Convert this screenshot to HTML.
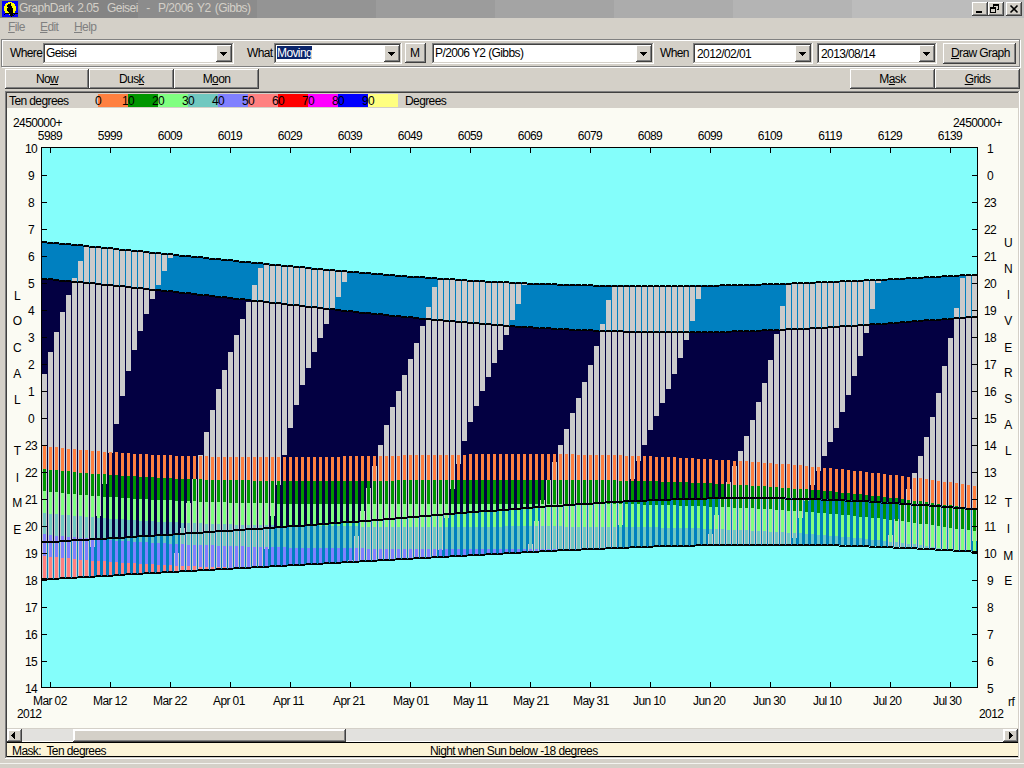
<!DOCTYPE html>
<html><head><meta charset="utf-8"><style>
html,body{margin:0;padding:0}
body{width:1024px;height:768px;position:relative;overflow:hidden;background:#d4d0c8;font-family:"Liberation Sans", sans-serif;font-size:11px;color:#000}
.a{position:absolute}
.t{position:absolute;white-space:nowrap;line-height:13px;font-size:12px;letter-spacing:-0.6px}
.u{position:absolute;white-space:nowrap;line-height:15px;font-size:12px;letter-spacing:-0.6px}
.raised{position:absolute;background:#d4d0c8;box-shadow:inset -1px -1px #404040, inset 1px 1px #fff, inset -2px -2px #808080, inset 2px 2px #d4d0c8}
.sunken{position:absolute;background:#fff;box-shadow:inset -1px -1px #fff, inset 1px 1px #808080, inset -2px -2px #d4d0c8, inset 2px 2px #404040}
</style></head><body>
<div class="a" style="left:0px;top:0;width:19px;height:18px;background:#808080"></div><div class="a" style="left:19px;top:0;width:119px;height:18px;background:#848484"></div><div class="a" style="left:138px;top:0;width:119px;height:18px;background:#8c8c8c"></div><div class="a" style="left:257px;top:0;width:119px;height:18px;background:#949494"></div><div class="a" style="left:376px;top:0;width:119px;height:18px;background:#9c9c9c"></div><div class="a" style="left:495px;top:0;width:119px;height:18px;background:#a4a4a4"></div><div class="a" style="left:614px;top:0;width:119px;height:18px;background:#acacac"></div><div class="a" style="left:733px;top:0;width:119px;height:18px;background:#b4b4b4"></div><div class="a" style="left:852px;top:0;width:119px;height:18px;background:#bcbcbc"></div><div class="a" style="left:971px;top:0;width:53px;height:18px;background:#c0c0c0"></div><svg class="a" style="left:0;top:0" width="20" height="18" shape-rendering="crispEdges"><rect x="2" y="1" width="16" height="16" fill="#0000ff"/><path fill="#ffff00" d="M8 2h4v1h-4zM6 3h8v1h-8zM5 4h10v1h-10zM5 5h10v1h-10zM4 6h12v1h-12zM4 7h12v1h-12zM4 8h12v1h-12zM4 9h12v1h-12zM4 10h12v1h-12zM5 11h10v1h-10zM5 12h10v1h-10zM9 14h1v1h-1z"/><path fill="#000" d="M10 3h1v1h-1zM8 4h3v1h-3zM7 5h4v1h-4zM7 6h5v1h-5zM8 7h4v1h-4zM7 8h6v1h-6zM7 9h6v1h-6zM7 10h6v1h-6zM8 11h5v1h-5zM9 12h4v1h-4zM5 13h13v1h-13zM4 14h1v1h-1zM10 14h3v1h-3zM14 14h1v1h-1zM10 15h4v1h-4zM11 16h1v1h-1z"/></svg><div class="u" style="left:19px;top:1px;color:#d4d0c8;letter-spacing:-0.5px;word-spacing:1.3px">GraphDark 2.05&nbsp;&nbsp;Geisei&nbsp;&nbsp;-&nbsp;&nbsp;P/2006 Y2 (Gibbs)</div><div class="raised" style="left:972px;top:2px;width:16px;height:14px"><div class="a" style="left:4px;top:9px;width:6px;height:2px;background:#000"></div></div><div class="raised" style="left:988px;top:2px;width:16px;height:14px"><svg class="a" style="left:0;top:0" width="16" height="14" shape-rendering="crispEdges"><path d="M5 2h6v2h-6zM5 4h1v1h-1zM10 4h1v4h-1zM9 7h1v1h-1zM2 5h6v2h-6zM2 7h1v4h-1zM7 7h1v4h-1zM2 10h6v1h-6z" fill="#000"/></svg></div><div class="raised" style="left:1006px;top:2px;width:16px;height:14px"><svg class="a" style="left:0;top:0" width="16" height="14"><path d="M4.5 3.5L11.5 10.5M11.5 3.5L4.5 10.5" stroke="#000" stroke-width="1.6"/></svg></div><div class="u" style="left:8px;top:20px;color:#808080"><u>F</u>ile</div><div class="u" style="left:40px;top:20px;color:#808080"><u>E</u>dit</div><div class="u" style="left:74px;top:20px;color:#808080"><u>H</u>elp</div><div class="a" style="left:2px;top:40px;width:1017px;height:26px;border:1px solid #fff"></div><div class="a" style="left:1px;top:39px;width:1017px;height:26px;border:1px solid #808080"></div><div class="u" style="left:10px;top:46px;">Where</div><div class="sunken" style="left:43px;top:43px;width:191px;height:21px"><div class="u" style="left:3px;top:3px">Geisei</div><div class="raised" style="right:2px;top:2px;width:16px;height:17px"><svg class="a" style="left:4px;top:7px" width="7" height="4" shape-rendering="crispEdges"><path d="M0 0h7v1h-1v1h-1v1h-1v1h-1v-1h-1v-1h-1v-1h-1z" fill="#000"/></svg></div></div><div class="u" style="left:247px;top:46px;">What</div><div class="sunken" style="left:274px;top:43px;width:128px;height:21px"><div class="a" style="left:3px;top:3px;width:35px;height:13px;background:#0a246a"></div><div class="u" style="left:3px;top:3px"><span style="color:#fff">Moving</span></div><div class="raised" style="right:2px;top:2px;width:16px;height:17px"><svg class="a" style="left:4px;top:7px" width="7" height="4" shape-rendering="crispEdges"><path d="M0 0h7v1h-1v1h-1v1h-1v1h-1v-1h-1v-1h-1v-1h-1z" fill="#000"/></svg></div></div><div class="raised" style="left:405px;top:43px;width:21px;height:20px"><div class="u" style="left:5px;top:3px">M</div></div><div class="sunken" style="left:432px;top:43px;width:222px;height:21px"><div class="u" style="left:3px;top:3px">P/2006 Y2 (Gibbs)</div><div class="raised" style="right:2px;top:2px;width:16px;height:17px"><svg class="a" style="left:4px;top:7px" width="7" height="4" shape-rendering="crispEdges"><path d="M0 0h7v1h-1v1h-1v1h-1v1h-1v-1h-1v-1h-1v-1h-1z" fill="#000"/></svg></div></div><div class="u" style="left:660px;top:46px;">When</div><div class="sunken" style="left:693px;top:43px;width:120px;height:21px"><div class="u" style="left:4px;top:4px">2012/02/01</div><div class="raised" style="right:2px;top:2px;width:16px;height:17px"><svg class="a" style="left:4px;top:7px" width="7" height="4" shape-rendering="crispEdges"><path d="M0 0h7v1h-1v1h-1v1h-1v1h-1v-1h-1v-1h-1v-1h-1z" fill="#000"/></svg></div></div><div class="sunken" style="left:817px;top:43px;width:120px;height:21px"><div class="u" style="left:4px;top:4px">2013/08/14</div><div class="raised" style="right:2px;top:2px;width:16px;height:17px"><svg class="a" style="left:4px;top:7px" width="7" height="4" shape-rendering="crispEdges"><path d="M0 0h7v1h-1v1h-1v1h-1v1h-1v-1h-1v-1h-1v-1h-1z" fill="#000"/></svg></div></div><div class="raised" style="left:943px;top:43px;width:73px;height:21px"><div class="u" style="left:8px;top:3px"><u>D</u>raw Graph</div></div><div class="raised" style="left:5px;top:69px;width:84px;height:20px"><div class="u" style="left:0;width:84px;top:3px;text-align:center">No<u>w</u></div></div><div class="raised" style="left:89px;top:69px;width:85px;height:20px"><div class="u" style="left:0;width:85px;top:3px;text-align:center">Dus<u>k</u></div></div><div class="raised" style="left:174px;top:69px;width:85px;height:20px"><div class="u" style="left:0;width:85px;top:3px;text-align:center">M<u>o</u>on</div></div><div class="raised" style="left:850px;top:69px;width:85px;height:20px"><div class="u" style="left:0;width:85px;top:3px;text-align:center">M<u>a</u>sk</div></div><div class="raised" style="left:935px;top:69px;width:85px;height:20px"><div class="u" style="left:0;width:85px;top:3px;text-align:center"><u>G</u>rids</div></div><div class="a" style="left:5px;top:91px;width:1015px;height:668px;box-shadow:inset -1px -1px #fff, inset 1px 1px #808080, inset -2px -2px #d4d0c8, inset 2px 2px #404040"></div><div class="a" style="left:7px;top:108px;width:1011px;height:620px;background:#fbfbf3"></div><div class="u" style="left:9px;top:94px;">Ten degrees</div><div class="a" style="left:98px;top:94px;width:30px;height:13px;background:#ff8040"></div><div class="a" style="left:128px;top:94px;width:30px;height:13px;background:#009600"></div><div class="a" style="left:158px;top:94px;width:30px;height:13px;background:#80ff80"></div><div class="a" style="left:188px;top:94px;width:30px;height:13px;background:#70c8c0"></div><div class="a" style="left:218px;top:94px;width:30px;height:13px;background:#8080ff"></div><div class="a" style="left:248px;top:94px;width:30px;height:13px;background:#ff8080"></div><div class="a" style="left:278px;top:94px;width:30px;height:13px;background:#ff0000"></div><div class="a" style="left:308px;top:94px;width:30px;height:13px;background:#ff00ff"></div><div class="a" style="left:338px;top:94px;width:30px;height:13px;background:#0000ff"></div><div class="a" style="left:368px;top:94px;width:30px;height:13px;background:#ffff80"></div><div class="t" style="left:83px;width:30px;text-align:center;top:95px">0</div><div class="t" style="left:113px;width:30px;text-align:center;top:95px">10</div><div class="t" style="left:143px;width:30px;text-align:center;top:95px">20</div><div class="t" style="left:173px;width:30px;text-align:center;top:95px">30</div><div class="t" style="left:203px;width:30px;text-align:center;top:95px">40</div><div class="t" style="left:233px;width:30px;text-align:center;top:95px">50</div><div class="t" style="left:263px;width:30px;text-align:center;top:95px">60</div><div class="t" style="left:293px;width:30px;text-align:center;top:95px">70</div><div class="t" style="left:323px;width:30px;text-align:center;top:95px">80</div><div class="t" style="left:353px;width:30px;text-align:center;top:95px">90</div><div class="u" style="left:405px;top:94px;">Degrees</div><div class="t" style="left:25px;width:50px;text-align:center;top:130px">5989</div><div class="t" style="left:85px;width:50px;text-align:center;top:130px">5999</div><div class="t" style="left:145px;width:50px;text-align:center;top:130px">6009</div><div class="t" style="left:205px;width:50px;text-align:center;top:130px">6019</div><div class="t" style="left:265px;width:50px;text-align:center;top:130px">6029</div><div class="t" style="left:325px;width:50px;text-align:center;top:130px">6039</div><div class="t" style="left:385px;width:50px;text-align:center;top:130px">6049</div><div class="t" style="left:445px;width:50px;text-align:center;top:130px">6059</div><div class="t" style="left:505px;width:50px;text-align:center;top:130px">6069</div><div class="t" style="left:565px;width:50px;text-align:center;top:130px">6079</div><div class="t" style="left:625px;width:50px;text-align:center;top:130px">6089</div><div class="t" style="left:685px;width:50px;text-align:center;top:130px">6099</div><div class="t" style="left:745px;width:50px;text-align:center;top:130px">6109</div><div class="t" style="left:805px;width:50px;text-align:center;top:130px">6119</div><div class="t" style="left:865px;width:50px;text-align:center;top:130px">6129</div><div class="t" style="left:925px;width:50px;text-align:center;top:130px">6139</div><div class="t" style="left:33px;top:695px">Mar 02</div><div class="t" style="left:93px;top:695px">Mar 12</div><div class="t" style="left:153px;top:695px">Mar 22</div><div class="t" style="left:213px;top:695px">Apr 01</div><div class="t" style="left:273px;top:695px">Apr 11</div><div class="t" style="left:333px;top:695px">Apr 21</div><div class="t" style="left:393px;top:695px">May 01</div><div class="t" style="left:453px;top:695px">May 11</div><div class="t" style="left:513px;top:695px">May 21</div><div class="t" style="left:573px;top:695px">May 31</div><div class="t" style="left:633px;top:695px">Jun 10</div><div class="t" style="left:693px;top:695px">Jun 20</div><div class="t" style="left:753px;top:695px">Jun 30</div><div class="t" style="left:813px;top:695px">Jul 10</div><div class="t" style="left:873px;top:695px">Jul 20</div><div class="t" style="left:933px;top:695px">Jul 30</div><div class="t" style="left:13px;top:117px;">2450000+</div><div class="t" style="left:953px;top:117px;">2450000+</div><div class="t" style="left:17px;top:708px;">2012</div><div class="t" style="left:979px;top:708px;">2012</div><div class="t" style="left:1008px;top:696px;">rf</div><div class="t" style="left:16px;width:30px;text-align:center;top:143px">10</div><div class="t" style="left:975px;width:30px;text-align:center;top:143px">1</div><div class="t" style="left:16px;width:30px;text-align:center;top:170px">9</div><div class="t" style="left:975px;width:30px;text-align:center;top:170px">0</div><div class="t" style="left:16px;width:30px;text-align:center;top:197px">8</div><div class="t" style="left:975px;width:30px;text-align:center;top:197px">23</div><div class="t" style="left:16px;width:30px;text-align:center;top:224px">7</div><div class="t" style="left:975px;width:30px;text-align:center;top:224px">22</div><div class="t" style="left:16px;width:30px;text-align:center;top:251px">6</div><div class="t" style="left:975px;width:30px;text-align:center;top:251px">21</div><div class="t" style="left:16px;width:30px;text-align:center;top:278px">5</div><div class="t" style="left:975px;width:30px;text-align:center;top:278px">20</div><div class="t" style="left:16px;width:30px;text-align:center;top:305px">4</div><div class="t" style="left:975px;width:30px;text-align:center;top:305px">19</div><div class="t" style="left:16px;width:30px;text-align:center;top:332px">3</div><div class="t" style="left:975px;width:30px;text-align:center;top:332px">18</div><div class="t" style="left:16px;width:30px;text-align:center;top:359px">2</div><div class="t" style="left:975px;width:30px;text-align:center;top:359px">17</div><div class="t" style="left:16px;width:30px;text-align:center;top:386px">1</div><div class="t" style="left:975px;width:30px;text-align:center;top:386px">16</div><div class="t" style="left:16px;width:30px;text-align:center;top:413px">0</div><div class="t" style="left:975px;width:30px;text-align:center;top:413px">15</div><div class="t" style="left:16px;width:30px;text-align:center;top:440px">23</div><div class="t" style="left:975px;width:30px;text-align:center;top:440px">14</div><div class="t" style="left:16px;width:30px;text-align:center;top:467px">22</div><div class="t" style="left:975px;width:30px;text-align:center;top:467px">13</div><div class="t" style="left:16px;width:30px;text-align:center;top:494px">21</div><div class="t" style="left:975px;width:30px;text-align:center;top:494px">12</div><div class="t" style="left:16px;width:30px;text-align:center;top:521px">20</div><div class="t" style="left:975px;width:30px;text-align:center;top:521px">11</div><div class="t" style="left:16px;width:30px;text-align:center;top:548px">19</div><div class="t" style="left:975px;width:30px;text-align:center;top:548px">10</div><div class="t" style="left:16px;width:30px;text-align:center;top:575px">18</div><div class="t" style="left:975px;width:30px;text-align:center;top:575px">9</div><div class="t" style="left:16px;width:30px;text-align:center;top:602px">17</div><div class="t" style="left:975px;width:30px;text-align:center;top:602px">8</div><div class="t" style="left:16px;width:30px;text-align:center;top:629px">16</div><div class="t" style="left:975px;width:30px;text-align:center;top:629px">7</div><div class="t" style="left:16px;width:30px;text-align:center;top:656px">15</div><div class="t" style="left:975px;width:30px;text-align:center;top:656px">6</div><div class="t" style="left:16px;width:30px;text-align:center;top:683px">14</div><div class="t" style="left:975px;width:30px;text-align:center;top:683px">5</div><div class="t" style="left:7px;width:20px;text-align:center;top:290px">L</div><div class="t" style="left:7px;width:20px;text-align:center;top:315px">O</div><div class="t" style="left:7px;width:20px;text-align:center;top:342px">C</div><div class="t" style="left:7px;width:20px;text-align:center;top:368px">A</div><div class="t" style="left:7px;width:20px;text-align:center;top:394px">L</div><div class="t" style="left:7px;width:20px;text-align:center;top:445px">T</div><div class="t" style="left:7px;width:20px;text-align:center;top:472px">I</div><div class="t" style="left:7px;width:20px;text-align:center;top:497px">M</div><div class="t" style="left:7px;width:20px;text-align:center;top:524px">E</div><div class="t" style="left:998px;width:20px;text-align:center;top:237px">U</div><div class="t" style="left:998px;width:20px;text-align:center;top:263px">N</div><div class="t" style="left:998px;width:20px;text-align:center;top:289px">I</div><div class="t" style="left:998px;width:20px;text-align:center;top:315px">V</div><div class="t" style="left:998px;width:20px;text-align:center;top:342px">E</div><div class="t" style="left:998px;width:20px;text-align:center;top:367px">R</div><div class="t" style="left:998px;width:20px;text-align:center;top:393px">S</div><div class="t" style="left:998px;width:20px;text-align:center;top:419px">A</div><div class="t" style="left:998px;width:20px;text-align:center;top:445px">L</div><div class="t" style="left:998px;width:20px;text-align:center;top:497px">T</div><div class="t" style="left:998px;width:20px;text-align:center;top:523px">I</div><div class="t" style="left:998px;width:20px;text-align:center;top:550px">M</div><div class="t" style="left:998px;width:20px;text-align:center;top:575px">E</div><svg class="a" style="left:0;top:0" width="1024" height="768" shape-rendering="crispEdges"><path fill="#84fefb" d="M42 148h6v540h-6zM48 148h6v540h-6zM54 148h6v540h-6zM60 148h6v540h-6zM66 148h6v540h-6zM72 148h6v540h-6zM78 148h6v540h-6zM84 148h6v540h-6zM90 148h6v540h-6zM96 148h6v540h-6zM102 148h6v540h-6zM108 148h6v540h-6zM114 148h6v540h-6zM120 148h6v540h-6zM126 148h6v540h-6zM132 148h6v540h-6zM138 148h6v540h-6zM144 148h6v540h-6zM150 148h6v540h-6zM156 148h6v540h-6zM162 148h6v540h-6zM168 148h6v540h-6zM174 148h6v540h-6zM180 148h6v540h-6zM186 148h6v540h-6zM192 148h6v540h-6zM198 148h6v540h-6zM204 148h6v540h-6zM210 148h6v540h-6zM216 148h6v540h-6zM222 148h6v540h-6zM228 148h6v540h-6zM234 148h6v540h-6zM240 148h6v540h-6zM246 148h6v540h-6zM252 148h6v540h-6zM258 148h6v540h-6zM264 148h6v540h-6zM270 148h6v540h-6zM276 148h6v540h-6zM282 148h6v540h-6zM288 148h6v540h-6zM294 148h6v540h-6zM300 148h6v540h-6zM306 148h6v540h-6zM312 148h6v540h-6zM318 148h6v540h-6zM324 148h6v540h-6zM330 148h6v540h-6zM336 148h6v540h-6zM342 148h6v540h-6zM348 148h6v540h-6zM354 148h6v540h-6zM360 148h6v540h-6zM366 148h6v540h-6zM372 148h6v540h-6zM378 148h6v540h-6zM384 148h6v540h-6zM390 148h6v540h-6zM396 148h6v540h-6zM402 148h6v540h-6zM408 148h6v540h-6zM414 148h6v540h-6zM420 148h6v540h-6zM426 148h6v540h-6zM432 148h6v540h-6zM438 148h6v540h-6zM444 148h6v540h-6zM450 148h6v540h-6zM456 148h6v540h-6zM462 148h6v540h-6zM468 148h6v540h-6zM474 148h6v540h-6zM480 148h6v540h-6zM486 148h6v540h-6zM492 148h6v540h-6zM498 148h6v540h-6zM504 148h6v540h-6zM510 148h6v540h-6zM516 148h6v540h-6zM522 148h6v540h-6zM528 148h6v540h-6zM534 148h6v540h-6zM540 148h6v540h-6zM546 148h6v540h-6zM552 148h6v540h-6zM558 148h6v540h-6zM564 148h6v540h-6zM570 148h6v540h-6zM576 148h6v540h-6zM582 148h6v540h-6zM588 148h6v540h-6zM594 148h6v540h-6zM600 148h6v540h-6zM606 148h6v540h-6zM612 148h6v540h-6zM618 148h6v540h-6zM624 148h6v540h-6zM630 148h6v540h-6zM636 148h6v540h-6zM642 148h6v540h-6zM648 148h6v540h-6zM654 148h6v540h-6zM660 148h6v540h-6zM666 148h6v540h-6zM672 148h6v540h-6zM678 148h6v540h-6zM684 148h6v540h-6zM690 148h6v540h-6zM696 148h6v540h-6zM702 148h6v540h-6zM708 148h6v540h-6zM714 148h6v540h-6zM720 148h6v540h-6zM726 148h6v540h-6zM732 148h6v540h-6zM738 148h6v540h-6zM744 148h6v540h-6zM750 148h6v540h-6zM756 148h6v540h-6zM762 148h6v540h-6zM768 148h6v540h-6zM774 148h6v540h-6zM780 148h6v540h-6zM786 148h6v540h-6zM792 148h6v540h-6zM798 148h6v540h-6zM804 148h6v540h-6zM810 148h6v540h-6zM816 148h6v540h-6zM822 148h6v540h-6zM828 148h6v540h-6zM834 148h6v540h-6zM840 148h6v540h-6zM846 148h6v540h-6zM852 148h6v540h-6zM858 148h6v540h-6zM864 148h6v540h-6zM870 148h6v540h-6zM876 148h6v540h-6zM882 148h6v540h-6zM888 148h6v540h-6zM894 148h6v540h-6zM900 148h6v540h-6zM906 148h6v540h-6zM912 148h6v540h-6zM918 148h6v540h-6zM924 148h6v540h-6zM930 148h6v540h-6zM936 148h6v540h-6zM942 148h6v540h-6zM948 148h6v540h-6zM954 148h6v540h-6zM960 148h6v540h-6zM966 148h6v540h-6zM972 148h5v540h-5z"/>
<path fill="#0080c0" d="M42 242h6v337h-6zM48 242h6v337h-6zM54 243h6v336h-6zM60 243h6v335h-6zM66 244h6v334h-6zM72 244h6v334h-6zM78 245h6v332h-6zM84 246h6v331h-6zM90 246h6v330h-6zM96 247h6v329h-6zM102 247h6v329h-6zM108 248h6v327h-6zM114 249h6v326h-6zM120 249h6v326h-6zM126 250h6v324h-6zM132 250h6v324h-6zM138 251h6v323h-6zM144 251h6v322h-6zM150 252h6v321h-6zM156 253h6v320h-6zM162 253h6v319h-6zM168 254h6v318h-6zM174 255h6v317h-6zM180 255h6v316h-6zM186 256h6v315h-6zM192 256h6v315h-6zM198 257h6v313h-6zM204 258h6v312h-6zM210 258h6v312h-6zM216 259h6v310h-6zM222 259h6v310h-6zM228 260h6v309h-6zM234 261h6v307h-6zM240 261h6v307h-6zM246 262h6v306h-6zM252 262h6v305h-6zM258 263h6v304h-6zM264 263h6v304h-6zM270 264h6v302h-6zM276 265h6v301h-6zM282 265h6v301h-6zM288 266h6v299h-6zM294 266h6v299h-6zM300 267h6v298h-6zM306 267h6v297h-6zM312 268h6v296h-6zM318 269h6v295h-6zM324 269h6v294h-6zM330 270h6v293h-6zM336 270h6v293h-6zM342 271h6v291h-6zM348 271h6v291h-6zM354 272h6v290h-6zM360 272h6v289h-6zM366 273h6v288h-6zM372 273h6v288h-6zM378 274h6v286h-6zM384 274h6v286h-6zM390 275h6v285h-6zM396 275h6v284h-6zM402 276h6v283h-6zM408 276h6v283h-6zM414 276h6v282h-6zM420 277h6v281h-6zM426 277h6v281h-6zM432 278h6v279h-6zM438 278h6v279h-6zM444 279h6v277h-6zM450 279h6v277h-6zM456 279h6v277h-6zM462 280h6v275h-6zM468 280h6v275h-6zM474 280h6v275h-6zM480 281h6v273h-6zM486 281h6v273h-6zM492 281h6v273h-6zM498 282h6v271h-6zM504 282h6v271h-6zM510 282h6v271h-6zM516 282h6v270h-6zM522 283h6v269h-6zM528 283h6v269h-6zM534 283h6v269h-6zM540 283h6v268h-6zM546 284h6v267h-6zM552 284h6v267h-6zM558 284h6v266h-6zM564 284h6v266h-6zM570 284h6v266h-6zM576 285h6v264h-6zM582 285h6v264h-6zM588 285h6v264h-6zM594 285h6v264h-6zM600 285h6v263h-6zM606 285h6v263h-6zM612 285h6v263h-6zM618 285h6v263h-6zM624 285h6v262h-6zM630 286h6v261h-6zM636 286h6v261h-6zM642 286h6v261h-6zM648 286h6v261h-6zM654 286h6v260h-6zM660 286h6v260h-6zM666 286h6v260h-6zM672 286h6v260h-6zM678 286h6v260h-6zM684 285h6v261h-6zM690 285h6v260h-6zM696 285h6v260h-6zM702 285h6v260h-6zM708 285h6v260h-6zM714 285h6v260h-6zM720 285h6v260h-6zM726 285h6v260h-6zM732 285h6v260h-6zM738 285h6v260h-6zM744 284h6v261h-6zM750 284h6v261h-6zM756 284h6v261h-6zM762 284h6v261h-6zM768 284h6v261h-6zM774 284h6v261h-6zM780 283h6v262h-6zM786 283h6v262h-6zM792 283h6v262h-6zM798 283h6v262h-6zM804 282h6v263h-6zM810 282h6v263h-6zM816 282h6v263h-6zM822 282h6v263h-6zM828 281h6v264h-6zM834 281h6v264h-6zM840 281h6v264h-6zM846 281h6v265h-6zM852 280h6v266h-6zM858 280h6v266h-6zM864 280h6v266h-6zM870 280h6v266h-6zM876 279h6v268h-6zM882 279h6v268h-6zM888 279h6v268h-6zM894 278h6v269h-6zM900 278h6v270h-6zM906 278h6v270h-6zM912 278h6v270h-6zM918 277h6v271h-6zM924 277h6v272h-6zM930 277h6v272h-6zM936 276h6v273h-6zM942 276h6v274h-6zM948 276h6v274h-6zM954 275h6v276h-6zM960 275h6v276h-6zM966 275h6v276h-6zM972 274h5v278h-5z"/>
<path fill="#030042" d="M42 279h6v263h-6zM48 279h6v263h-6zM54 280h6v261h-6zM60 280h6v261h-6zM66 281h6v260h-6zM72 282h6v258h-6zM78 282h6v258h-6zM84 283h6v257h-6zM90 283h6v256h-6zM96 284h6v255h-6zM102 284h6v255h-6zM108 285h6v253h-6zM114 286h6v252h-6zM120 286h6v251h-6zM126 287h6v250h-6zM132 288h6v249h-6zM138 288h6v248h-6zM144 289h6v247h-6zM150 289h6v247h-6zM156 290h6v245h-6zM162 291h6v244h-6zM168 291h6v243h-6zM174 292h6v242h-6zM180 293h6v241h-6zM186 293h6v240h-6zM192 294h6v239h-6zM198 295h6v238h-6zM204 295h6v237h-6zM210 296h6v236h-6zM216 297h6v234h-6zM222 297h6v234h-6zM228 298h6v233h-6zM234 299h6v231h-6zM240 299h6v231h-6zM246 300h6v229h-6zM252 301h6v228h-6zM258 301h6v228h-6zM264 302h6v226h-6zM270 303h6v225h-6zM276 303h6v224h-6zM282 304h6v223h-6zM288 305h6v221h-6zM294 305h6v221h-6zM300 306h6v220h-6zM306 307h6v218h-6zM312 307h6v218h-6zM318 308h6v216h-6zM324 309h6v215h-6zM330 309h6v214h-6zM336 310h6v213h-6zM342 311h6v211h-6zM348 311h6v211h-6zM354 312h6v209h-6zM360 312h6v209h-6zM366 313h6v208h-6zM372 314h6v206h-6zM378 314h6v206h-6zM384 315h6v204h-6zM390 316h6v203h-6zM396 316h6v202h-6zM402 317h6v201h-6zM408 317h6v200h-6zM414 318h6v199h-6zM420 318h6v198h-6zM426 319h6v197h-6zM432 320h6v195h-6zM438 320h6v195h-6zM444 321h6v193h-6zM450 321h6v193h-6zM456 322h6v191h-6zM462 322h6v191h-6zM468 323h6v189h-6zM474 323h6v189h-6zM480 324h6v187h-6zM486 324h6v187h-6zM492 325h6v185h-6zM498 325h6v185h-6zM504 326h6v183h-6zM510 326h6v183h-6zM516 326h6v183h-6zM522 327h6v181h-6zM528 327h6v181h-6zM534 328h6v179h-6zM540 328h6v179h-6zM546 328h6v178h-6zM552 329h6v177h-6zM558 329h6v176h-6zM564 329h6v176h-6zM570 330h6v175h-6zM576 330h6v174h-6zM582 330h6v174h-6zM588 330h6v173h-6zM594 331h6v172h-6zM600 331h6v172h-6zM606 331h6v171h-6zM612 331h6v171h-6zM618 331h6v171h-6zM624 331h6v170h-6zM630 332h6v169h-6zM636 332h6v169h-6zM642 332h6v169h-6zM648 332h6v168h-6zM654 332h6v168h-6zM660 332h6v168h-6zM666 332h6v168h-6zM672 332h6v167h-6zM678 332h6v167h-6zM684 332h6v167h-6zM690 332h6v167h-6zM696 332h6v167h-6zM702 332h6v166h-6zM708 332h6v166h-6zM714 332h6v166h-6zM720 332h6v166h-6zM726 331h6v167h-6zM732 331h6v167h-6zM738 331h6v167h-6zM744 331h6v167h-6zM750 331h6v167h-6zM756 331h6v167h-6zM762 330h6v168h-6zM768 330h6v168h-6zM774 330h6v168h-6zM780 330h6v168h-6zM786 329h6v169h-6zM792 329h6v170h-6zM798 329h6v170h-6zM804 328h6v171h-6zM810 328h6v171h-6zM816 328h6v171h-6zM822 327h6v172h-6zM828 327h6v173h-6zM834 327h6v173h-6zM840 326h6v174h-6zM846 326h6v174h-6zM852 325h6v176h-6zM858 325h6v176h-6zM864 325h6v176h-6zM870 324h6v178h-6zM876 324h6v178h-6zM882 323h6v179h-6zM888 323h6v180h-6zM894 323h6v180h-6zM900 322h6v182h-6zM906 322h6v182h-6zM912 321h6v183h-6zM918 321h6v184h-6zM924 320h6v185h-6zM930 320h6v186h-6zM936 319h6v187h-6zM942 319h6v188h-6zM948 319h6v188h-6zM954 318h6v190h-6zM960 318h6v190h-6zM966 317h6v192h-6zM972 317h5v192h-5z"/>
<path fill="#cbcbcb" d="M42 374h5v206h-5zM48 352h5v228h-5zM54 332h5v248h-5zM60 312h5v267h-5zM66 295h5v284h-5zM72 278h5v301h-5zM78 261h5v317h-5zM84 247h5v331h-5zM90 248h5v299h-5zM96 248h5v268h-5zM102 249h5v235h-5zM108 249h5v204h-5zM114 250h5v174h-5zM120 251h5v145h-5zM126 251h5v120h-5zM132 252h5v98h-5zM138 252h5v79h-5zM144 253h5v61h-5zM150 254h5v45h-5zM156 254h5v31h-5zM162 255h5v16h-5zM168 255h5v3h-5zM174 553h5v20h-5zM180 528h5v44h-5zM186 503h5v69h-5zM192 479h5v93h-5zM198 455h5v116h-5zM204 432h5v139h-5zM210 410h5v161h-5zM216 389h5v181h-5zM222 370h5v200h-5zM228 352h5v218h-5zM234 335h5v234h-5zM240 319h5v250h-5zM246 302h5v267h-5zM252 285h5v283h-5zM258 268h5v300h-5zM264 265h5v284h-5zM270 266h5v250h-5zM276 266h5v219h-5zM282 267h5v188h-5zM288 267h5v161h-5zM294 268h5v137h-5zM300 268h5v117h-5zM306 269h5v99h-5zM312 270h5v82h-5zM318 270h5v68h-5zM324 271h5v53h-5zM330 271h5v39h-5zM336 272h5v25h-5zM342 272h5v10h-5zM348 560h5v3h-5zM354 536h5v27h-5zM360 511h5v51h-5zM366 488h5v74h-5zM372 466h5v96h-5zM378 445h5v116h-5zM384 425h5v136h-5zM390 407h5v154h-5zM396 391h5v169h-5zM402 375h5v185h-5zM408 359h5v201h-5zM414 343h5v216h-5zM420 326h5v233h-5zM426 307h5v252h-5zM432 287h5v271h-5zM438 280h5v270h-5zM444 280h5v238h-5zM450 280h5v209h-5zM456 281h5v183h-5zM462 281h5v160h-5zM468 282h5v140h-5zM474 282h5v124h-5zM480 282h5v109h-5zM486 283h5v94h-5zM492 283h5v80h-5zM498 283h5v67h-5zM504 283h5v52h-5zM510 284h5v36h-5zM516 284h5v20h-5zM522 284h5v1h-5zM528 544h5v9h-5zM534 521h5v32h-5zM540 500h5v52h-5zM546 480h5v72h-5zM552 462h5v90h-5zM558 445h5v106h-5zM564 429h5v122h-5zM570 413h5v138h-5zM576 398h5v152h-5zM582 382h5v168h-5zM588 365h5v185h-5zM594 346h5v204h-5zM600 324h5v225h-5zM606 300h5v249h-5zM612 287h5v262h-5zM618 287h5v238h-5zM624 287h5v213h-5zM630 287h5v192h-5zM636 287h5v174h-5zM642 287h5v158h-5zM648 287h5v143h-5zM654 287h5v129h-5zM660 287h5v116h-5zM666 287h5v102h-5zM672 287h5v87h-5zM678 287h5v71h-5zM684 287h5v53h-5zM690 287h5v34h-5zM696 287h5v12h-5zM708 534h5v12h-5zM714 515h5v31h-5zM720 498h5v48h-5zM726 482h5v64h-5zM732 466h5v80h-5zM738 451h5v95h-5zM744 436h5v110h-5zM750 420h5v126h-5zM756 402h5v144h-5zM762 383h5v163h-5zM768 360h5v186h-5zM774 334h5v212h-5zM780 306h5v240h-5zM786 285h5v261h-5zM792 284h5v254h-5zM798 284h5v234h-5zM804 284h5v217h-5zM810 284h5v201h-5zM816 283h5v188h-5zM822 283h5v173h-5zM828 283h5v159h-5zM834 283h5v145h-5zM840 282h5v130h-5zM846 282h5v113h-5zM852 282h5v94h-5zM858 282h5v74h-5zM864 281h5v52h-5zM870 281h5v28h-5zM876 281h5v2h-5zM888 535h5v13h-5zM894 519h5v29h-5zM900 504h5v45h-5zM906 489h5v60h-5zM912 473h5v76h-5zM918 456h5v93h-5zM924 437h5v113h-5zM930 417h5v133h-5zM936 393h5v157h-5zM942 366h5v185h-5zM948 338h5v213h-5zM954 308h5v244h-5zM960 278h5v274h-5zM966 276h5v276h-5zM972 276h5v265h-5z"/>
<path fill="#ff8040" d="M43 446h3v24h-3zM49 447h3v24h-3zM55 447h3v24h-3zM61 448h3v24h-3zM67 449h3v23h-3zM73 449h3v24h-3zM79 450h3v24h-3zM85 450h3v24h-3zM91 451h3v24h-3zM97 451h3v24h-3zM103 452h3v23h-3zM109 452h3v24h-3zM115 452h3v24h-3zM121 453h3v24h-3zM127 453h3v24h-3zM133 454h3v23h-3zM139 454h3v24h-3zM145 454h3v24h-3zM151 455h3v23h-3zM157 455h3v24h-3zM163 455h3v24h-3zM169 455h3v24h-3zM175 456h3v24h-3zM181 456h3v24h-3zM187 456h3v24h-3zM193 456h3v24h-3zM199 456h3v24h-3zM205 456h3v25h-3zM211 457h3v24h-3zM217 457h3v24h-3zM223 457h3v24h-3zM229 457h3v24h-3zM235 457h3v24h-3zM241 457h3v24h-3zM247 457h3v24h-3zM253 457h3v25h-3zM259 457h3v25h-3zM265 457h3v25h-3zM271 457h3v25h-3zM277 457h3v25h-3zM283 457h3v25h-3zM289 457h3v25h-3zM295 457h3v25h-3zM301 457h3v25h-3zM307 457h3v25h-3zM313 457h3v25h-3zM319 457h3v25h-3zM325 457h3v25h-3zM331 457h3v25h-3zM337 457h3v25h-3zM343 456h3v26h-3zM349 456h3v26h-3zM355 456h3v26h-3zM361 456h3v26h-3zM367 456h3v26h-3zM373 456h3v26h-3zM379 456h3v26h-3zM385 456h3v26h-3zM391 456h3v26h-3zM397 456h3v25h-3zM403 455h3v26h-3zM409 455h3v26h-3zM415 455h3v26h-3zM421 455h3v26h-3zM427 455h3v26h-3zM433 455h3v26h-3zM439 455h3v26h-3zM445 455h3v26h-3zM451 455h3v26h-3zM457 455h3v26h-3zM463 455h3v26h-3zM469 454h3v27h-3zM475 454h3v27h-3zM481 454h3v27h-3zM487 454h3v27h-3zM493 454h3v27h-3zM499 454h3v27h-3zM505 454h3v27h-3zM511 454h3v27h-3zM517 454h3v27h-3zM523 454h3v27h-3zM529 454h3v27h-3zM535 454h3v27h-3zM541 454h3v27h-3zM547 454h3v27h-3zM553 454h3v27h-3zM559 454h3v27h-3zM565 454h3v27h-3zM571 454h3v27h-3zM577 455h3v26h-3zM583 455h3v26h-3zM589 455h3v26h-3zM595 455h3v26h-3zM601 455h3v26h-3zM607 455h3v26h-3zM613 455h3v26h-3zM619 455h3v27h-3zM625 456h3v26h-3zM631 456h3v26h-3zM637 456h3v26h-3zM643 456h3v26h-3zM649 456h3v26h-3zM655 457h3v25h-3zM661 457h3v26h-3zM667 457h3v26h-3zM673 457h3v26h-3zM679 458h3v25h-3zM685 458h3v25h-3zM691 458h3v26h-3zM697 459h3v25h-3zM703 459h3v25h-3zM709 459h3v25h-3zM715 460h3v25h-3zM721 460h3v25h-3zM727 460h3v25h-3zM733 461h3v25h-3zM739 461h3v25h-3zM745 461h3v25h-3zM751 462h3v25h-3zM757 462h3v25h-3zM763 463h3v24h-3zM769 463h3v25h-3zM775 464h3v24h-3zM781 464h3v25h-3zM787 464h3v25h-3zM793 465h3v25h-3zM799 465h3v25h-3zM805 466h3v24h-3zM811 467h3v24h-3zM817 467h3v24h-3zM823 468h3v24h-3zM829 468h3v24h-3zM835 469h3v24h-3zM841 469h3v25h-3zM847 470h3v24h-3zM853 471h3v24h-3zM859 471h3v24h-3zM865 472h3v24h-3zM871 473h3v24h-3zM877 473h3v24h-3zM883 474h3v24h-3zM889 475h3v24h-3zM895 475h3v24h-3zM901 476h3v24h-3zM907 477h3v24h-3zM913 478h3v24h-3zM919 478h3v24h-3zM925 479h3v24h-3zM931 480h3v24h-3zM937 481h3v24h-3zM943 482h3v24h-3zM949 482h3v24h-3zM955 483h3v24h-3zM961 484h3v24h-3zM967 485h3v24h-3zM973 486h3v24h-3z"/>
<path fill="#009600" d="M43 469h3v23h-3zM49 470h3v23h-3zM55 470h3v23h-3zM61 471h3v23h-3zM67 471h3v24h-3zM73 472h3v23h-3zM79 473h3v23h-3zM85 473h3v23h-3zM91 474h3v23h-3zM97 474h3v23h-3zM103 474h3v24h-3zM109 475h3v23h-3zM115 475h3v23h-3zM121 476h3v23h-3zM127 476h3v23h-3zM133 476h3v24h-3zM139 477h3v23h-3zM145 477h3v23h-3zM151 477h3v24h-3zM157 478h3v23h-3zM163 478h3v23h-3zM169 478h3v23h-3zM175 479h3v23h-3zM181 479h3v23h-3zM187 479h3v23h-3zM193 479h3v23h-3zM199 479h3v24h-3zM205 480h3v23h-3zM211 480h3v23h-3zM217 480h3v23h-3zM223 480h3v23h-3zM229 480h3v24h-3zM235 480h3v24h-3zM241 480h3v24h-3zM247 480h3v24h-3zM253 481h3v23h-3zM259 481h3v23h-3zM265 481h3v23h-3zM271 481h3v23h-3zM277 481h3v24h-3zM283 481h3v24h-3zM289 481h3v24h-3zM295 481h3v24h-3zM301 481h3v24h-3zM307 481h3v24h-3zM313 481h3v24h-3zM319 481h3v24h-3zM325 481h3v24h-3zM331 481h3v24h-3zM337 481h3v24h-3zM343 481h3v24h-3zM349 481h3v24h-3zM355 481h3v24h-3zM361 481h3v24h-3zM367 481h3v24h-3zM373 481h3v24h-3zM379 481h3v24h-3zM385 481h3v24h-3zM391 481h3v24h-3zM397 480h3v25h-3zM403 480h3v25h-3zM409 480h3v25h-3zM415 480h3v25h-3zM421 480h3v25h-3zM427 480h3v25h-3zM433 480h3v25h-3zM439 480h3v25h-3zM445 480h3v25h-3zM451 480h3v25h-3zM457 480h3v25h-3zM463 480h3v25h-3zM469 480h3v25h-3zM475 480h3v25h-3zM481 480h3v25h-3zM487 480h3v25h-3zM493 480h3v25h-3zM499 480h3v25h-3zM505 480h3v25h-3zM511 480h3v25h-3zM517 480h3v25h-3zM523 480h3v25h-3zM529 480h3v25h-3zM535 480h3v25h-3zM541 480h3v25h-3zM547 480h3v25h-3zM553 480h3v25h-3zM559 480h3v25h-3zM565 480h3v25h-3zM571 480h3v25h-3zM577 480h3v25h-3zM583 480h3v25h-3zM589 480h3v25h-3zM595 480h3v25h-3zM601 480h3v25h-3zM607 480h3v25h-3zM613 480h3v25h-3zM619 481h3v24h-3zM625 481h3v24h-3zM631 481h3v24h-3zM637 481h3v24h-3zM643 481h3v25h-3zM649 481h3v25h-3zM655 481h3v25h-3zM661 482h3v24h-3zM667 482h3v24h-3zM673 482h3v24h-3zM679 482h3v25h-3zM685 482h3v25h-3zM691 483h3v24h-3zM697 483h3v24h-3zM703 483h3v24h-3zM709 483h3v25h-3zM715 484h3v24h-3zM721 484h3v24h-3zM727 484h3v24h-3zM733 485h3v24h-3zM739 485h3v24h-3zM745 485h3v24h-3zM751 486h3v23h-3zM757 486h3v24h-3zM763 486h3v24h-3zM769 487h3v23h-3zM775 487h3v24h-3zM781 488h3v23h-3zM787 488h3v24h-3zM793 489h3v23h-3zM799 489h3v23h-3zM805 489h3v24h-3zM811 490h3v23h-3zM817 490h3v24h-3zM823 491h3v23h-3zM829 491h3v24h-3zM835 492h3v23h-3zM841 493h3v23h-3zM847 493h3v23h-3zM853 494h3v23h-3zM859 494h3v24h-3zM865 495h3v23h-3zM871 496h3v23h-3zM877 496h3v23h-3zM883 497h3v23h-3zM889 498h3v23h-3zM895 498h3v24h-3zM901 499h3v23h-3zM907 500h3v23h-3zM913 501h3v23h-3zM919 501h3v24h-3zM925 502h3v23h-3zM931 503h3v23h-3zM937 504h3v23h-3zM943 505h3v23h-3zM949 505h3v24h-3zM955 506h3v24h-3zM961 507h3v23h-3zM967 508h3v23h-3zM973 509h3v23h-3z"/>
<path fill="#80ff80" d="M43 491h3v23h-3zM49 492h3v23h-3zM55 492h3v23h-3zM61 493h3v23h-3zM67 494h3v22h-3zM73 494h3v23h-3zM79 495h3v22h-3zM85 495h3v23h-3zM91 496h3v22h-3zM97 496h3v23h-3zM103 497h3v22h-3zM109 497h3v23h-3zM115 497h3v23h-3zM121 498h3v22h-3zM127 498h3v23h-3zM133 499h3v22h-3zM139 499h3v23h-3zM145 499h3v23h-3zM151 500h3v22h-3zM157 500h3v23h-3zM163 500h3v23h-3zM169 500h3v23h-3zM175 501h3v22h-3zM181 501h3v23h-3zM187 501h3v23h-3zM193 501h3v23h-3zM199 502h3v22h-3zM205 502h3v23h-3zM211 502h3v23h-3zM217 502h3v23h-3zM223 502h3v23h-3zM229 503h3v22h-3zM235 503h3v23h-3zM241 503h3v23h-3zM247 503h3v23h-3zM253 503h3v23h-3zM259 503h3v23h-3zM265 503h3v23h-3zM271 503h3v23h-3zM277 504h3v23h-3zM283 504h3v23h-3zM289 504h3v23h-3zM295 504h3v23h-3zM301 504h3v23h-3zM307 504h3v23h-3zM313 504h3v23h-3zM319 504h3v23h-3zM325 504h3v23h-3zM331 504h3v23h-3zM337 504h3v23h-3zM343 504h3v23h-3zM349 504h3v23h-3zM355 504h3v23h-3zM361 504h3v24h-3zM367 504h3v24h-3zM373 504h3v24h-3zM379 504h3v24h-3zM385 504h3v24h-3zM391 504h3v24h-3zM397 504h3v24h-3zM403 504h3v24h-3zM409 504h3v24h-3zM415 504h3v24h-3zM421 504h3v24h-3zM427 504h3v24h-3zM433 504h3v24h-3zM439 504h3v24h-3zM445 504h3v24h-3zM451 504h3v24h-3zM457 504h3v24h-3zM463 504h3v24h-3zM469 504h3v24h-3zM475 504h3v24h-3zM481 504h3v24h-3zM487 504h3v24h-3zM493 504h3v24h-3zM499 504h3v24h-3zM505 504h3v23h-3zM511 504h3v23h-3zM517 504h3v23h-3zM523 504h3v23h-3zM529 504h3v23h-3zM535 504h3v23h-3zM541 504h3v23h-3zM547 504h3v23h-3zM553 504h3v23h-3zM559 504h3v23h-3zM565 504h3v24h-3zM571 504h3v24h-3zM577 504h3v24h-3zM583 504h3v24h-3zM589 504h3v24h-3zM595 504h3v24h-3zM601 504h3v24h-3zM607 504h3v24h-3zM613 504h3v24h-3zM619 504h3v24h-3zM625 504h3v24h-3zM631 504h3v24h-3zM637 504h3v24h-3zM643 505h3v23h-3zM649 505h3v23h-3zM655 505h3v23h-3zM661 505h3v24h-3zM667 505h3v24h-3zM673 505h3v24h-3zM679 506h3v23h-3zM685 506h3v23h-3zM691 506h3v23h-3zM697 506h3v23h-3zM703 506h3v24h-3zM709 507h3v23h-3zM715 507h3v23h-3zM721 507h3v23h-3zM727 507h3v24h-3zM733 508h3v23h-3zM739 508h3v23h-3zM745 508h3v23h-3zM751 508h3v24h-3zM757 509h3v23h-3zM763 509h3v23h-3zM769 509h3v24h-3zM775 510h3v23h-3zM781 510h3v23h-3zM787 511h3v23h-3zM793 511h3v23h-3zM799 511h3v23h-3zM805 512h3v23h-3zM811 512h3v23h-3zM817 513h3v23h-3zM823 513h3v23h-3zM829 514h3v23h-3zM835 514h3v23h-3zM841 515h3v23h-3zM847 515h3v23h-3zM853 516h3v23h-3zM859 517h3v22h-3zM865 517h3v23h-3zM871 518h3v23h-3zM877 518h3v23h-3zM883 519h3v23h-3zM889 520h3v23h-3zM895 521h3v22h-3zM901 521h3v23h-3zM907 522h3v23h-3zM913 523h3v22h-3zM919 524h3v22h-3zM925 524h3v23h-3zM931 525h3v23h-3zM937 526h3v23h-3zM943 527h3v23h-3zM949 528h3v22h-3zM955 529h3v22h-3zM961 529h3v23h-3zM967 530h3v22h-3zM973 531h3v22h-3z"/>
<path fill="#70c8c0" d="M43 513h3v22h-3zM49 514h3v22h-3zM55 514h3v23h-3zM61 515h3v22h-3zM67 515h3v23h-3zM73 516h3v22h-3zM79 516h3v23h-3zM85 517h3v22h-3zM91 517h3v23h-3zM97 518h3v22h-3zM103 518h3v23h-3zM109 519h3v22h-3zM115 519h3v23h-3zM121 519h3v23h-3zM127 520h3v22h-3zM133 520h3v23h-3zM139 521h3v22h-3zM145 521h3v22h-3zM151 521h3v23h-3zM157 522h3v22h-3zM163 522h3v22h-3zM169 522h3v23h-3zM175 522h3v23h-3zM181 523h3v22h-3zM187 523h3v23h-3zM193 523h3v23h-3zM199 523h3v23h-3zM205 524h3v22h-3zM211 524h3v22h-3zM217 524h3v23h-3zM223 524h3v23h-3zM229 524h3v23h-3zM235 525h3v22h-3zM241 525h3v22h-3zM247 525h3v23h-3zM253 525h3v23h-3zM259 525h3v23h-3zM265 525h3v23h-3zM271 525h3v23h-3zM277 526h3v22h-3zM283 526h3v22h-3zM289 526h3v23h-3zM295 526h3v23h-3zM301 526h3v23h-3zM307 526h3v23h-3zM313 526h3v23h-3zM319 526h3v23h-3zM325 526h3v23h-3zM331 526h3v23h-3zM337 526h3v23h-3zM343 526h3v23h-3zM349 526h3v23h-3zM355 526h3v23h-3zM361 527h3v22h-3zM367 527h3v23h-3zM373 527h3v23h-3zM379 527h3v23h-3zM385 527h3v23h-3zM391 527h3v23h-3zM397 527h3v23h-3zM403 527h3v23h-3zM409 527h3v23h-3zM415 527h3v23h-3zM421 527h3v23h-3zM427 527h3v23h-3zM433 527h3v23h-3zM439 527h3v23h-3zM445 527h3v23h-3zM451 527h3v23h-3zM457 527h3v23h-3zM463 527h3v23h-3zM469 527h3v23h-3zM475 527h3v23h-3zM481 527h3v23h-3zM487 527h3v23h-3zM493 527h3v23h-3zM499 527h3v23h-3zM505 526h3v24h-3zM511 526h3v24h-3zM517 526h3v24h-3zM523 526h3v24h-3zM529 526h3v24h-3zM535 526h3v24h-3zM541 526h3v24h-3zM547 526h3v24h-3zM553 526h3v24h-3zM559 526h3v24h-3zM565 527h3v23h-3zM571 527h3v23h-3zM577 527h3v23h-3zM583 527h3v23h-3zM589 527h3v23h-3zM595 527h3v23h-3zM601 527h3v22h-3zM607 527h3v22h-3zM613 527h3v22h-3zM619 527h3v22h-3zM625 527h3v21h-3zM631 527h3v21h-3zM637 527h3v21h-3zM643 527h3v21h-3zM649 527h3v21h-3zM655 527h3v20h-3zM661 528h3v19h-3zM667 528h3v19h-3zM673 528h3v19h-3zM679 528h3v19h-3zM685 528h3v19h-3zM691 528h3v18h-3zM697 528h3v18h-3zM703 529h3v17h-3zM709 529h3v17h-3zM715 529h3v17h-3zM721 529h3v17h-3zM727 530h3v16h-3zM733 530h3v16h-3zM739 530h3v16h-3zM745 530h3v16h-3zM751 531h3v15h-3zM757 531h3v15h-3zM763 531h3v15h-3zM769 532h3v14h-3zM775 532h3v14h-3zM781 532h3v14h-3zM787 533h3v13h-3zM793 533h3v13h-3zM799 533h3v13h-3zM805 534h3v12h-3zM811 534h3v12h-3zM817 535h3v11h-3zM823 535h3v11h-3zM829 536h3v10h-3zM835 536h3v10h-3zM841 537h3v9h-3zM847 537h3v10h-3zM853 538h3v9h-3zM859 538h3v9h-3zM865 539h3v8h-3zM871 540h3v7h-3zM877 540h3v8h-3zM883 541h3v7h-3zM889 542h3v6h-3zM895 542h3v6h-3zM901 543h3v6h-3zM907 544h3v5h-3zM913 544h3v5h-3zM919 545h3v4h-3zM925 546h3v4h-3zM931 547h3v3h-3zM937 548h3v2h-3zM943 549h3v2h-3zM949 549h3v2h-3zM955 550h3v2h-3z"/>
<path fill="#8080ff" d="M43 534h3v23h-3zM49 535h3v23h-3zM55 536h3v22h-3zM61 536h3v23h-3zM67 537h3v22h-3zM73 537h3v23h-3zM79 538h3v23h-3zM85 538h3v23h-3zM91 539h3v23h-3zM97 539h3v23h-3zM103 540h3v22h-3zM109 540h3v23h-3zM115 541h3v22h-3zM121 541h3v23h-3zM127 541h3v23h-3zM133 542h3v22h-3zM139 542h3v23h-3zM145 542h3v23h-3zM151 543h3v22h-3zM157 543h3v23h-3zM163 543h3v23h-3zM169 544h3v22h-3zM175 544h3v23h-3zM181 544h3v23h-3zM187 545h3v22h-3zM193 545h3v22h-3zM199 545h3v23h-3zM205 545h3v23h-3zM211 545h3v23h-3zM217 546h3v22h-3zM223 546h3v22h-3zM229 546h3v23h-3zM235 546h3v23h-3zM241 546h3v23h-3zM247 547h3v22h-3zM253 547h3v21h-3zM259 547h3v21h-3zM265 547h3v21h-3zM271 547h3v20h-3zM277 547h3v20h-3zM283 547h3v20h-3zM289 548h3v18h-3zM295 548h3v18h-3zM301 548h3v18h-3zM307 548h3v17h-3zM313 548h3v17h-3zM319 548h3v17h-3zM325 548h3v16h-3zM331 548h3v16h-3zM337 548h3v16h-3zM343 548h3v15h-3zM349 548h3v15h-3zM355 548h3v15h-3zM361 548h3v14h-3zM367 549h3v13h-3zM373 549h3v13h-3zM379 549h3v12h-3zM385 549h3v12h-3zM391 549h3v12h-3zM397 549h3v11h-3zM403 549h3v11h-3zM409 549h3v11h-3zM415 549h3v10h-3zM421 549h3v10h-3zM427 549h3v10h-3zM433 549h3v9h-3zM439 549h3v9h-3zM445 549h3v8h-3zM451 549h3v8h-3zM457 549h3v8h-3zM463 549h3v7h-3zM469 549h3v7h-3zM475 549h3v7h-3zM481 549h3v6h-3zM487 549h3v6h-3zM493 549h3v6h-3zM499 549h3v5h-3zM505 549h3v5h-3zM511 549h3v5h-3zM517 549h3v4h-3zM523 549h3v4h-3zM529 549h3v4h-3zM535 549h3v4h-3zM541 549h3v3h-3zM547 549h3v3h-3zM553 549h3v3h-3zM559 549h3v2h-3zM565 549h3v2h-3zM571 549h3v2h-3zM577 549h3v1h-3zM583 549h3v1h-3zM589 549h3v1h-3z"/>
<path fill="#ff8080" d="M43 578h3v2h-3zM43 556h3v23h-3zM49 557h3v23h-3zM55 557h3v23h-3zM61 558h3v21h-3zM67 558h3v21h-3zM73 559h3v20h-3zM79 560h3v18h-3zM85 560h3v18h-3zM91 561h3v16h-3zM97 561h3v16h-3zM103 561h3v16h-3zM109 562h3v14h-3zM115 562h3v14h-3zM121 563h3v13h-3zM127 563h3v12h-3zM133 563h3v12h-3zM139 564h3v11h-3zM145 564h3v10h-3zM151 564h3v10h-3zM157 565h3v9h-3zM163 565h3v8h-3zM169 565h3v8h-3zM175 566h3v7h-3zM181 566h3v6h-3zM187 566h3v6h-3zM193 566h3v6h-3zM199 567h3v4h-3zM205 567h3v4h-3zM211 567h3v4h-3zM217 567h3v3h-3zM223 567h3v3h-3zM229 568h3v2h-3zM235 568h3v1h-3z"/>
<path fill="#000" d="M42 578h5v2h-5zM42 541h5v2h-5zM42 278h5v2h-5zM42 241h5v2h-5zM48 578h5v2h-5zM47 579h1v1h-1zM48 541h5v2h-5zM47 542h1v1h-1zM48 278h5v2h-5zM47 279h1v1h-1zM48 242h5v2h-5zM47 243h1v1h-1zM54 578h5v2h-5zM53 579h1v1h-1zM54 541h5v2h-5zM53 542h1v1h-1zM54 279h5v2h-5zM53 280h1v1h-1zM54 242h5v2h-5zM53 243h1v1h-1zM60 577h5v2h-5zM59 578h1v1h-1zM60 540h5v2h-5zM59 541h1v1h-1zM60 280h5v2h-5zM59 281h1v1h-1zM60 243h5v2h-5zM59 244h1v1h-1zM66 577h5v2h-5zM65 578h1v1h-1zM66 540h5v2h-5zM65 541h1v1h-1zM66 280h5v2h-5zM65 281h1v1h-1zM66 243h5v2h-5zM65 244h1v1h-1zM72 577h5v2h-5zM71 578h1v1h-1zM72 539h5v2h-5zM71 540h1v1h-1zM72 281h5v2h-5zM71 282h1v1h-1zM72 244h5v2h-5zM71 245h1v1h-1zM78 576h5v2h-5zM77 577h1v1h-1zM78 539h5v2h-5zM77 540h1v1h-1zM78 281h5v2h-5zM77 282h1v1h-1zM78 244h5v2h-5zM77 245h1v1h-1zM84 576h5v2h-5zM83 577h1v1h-1zM84 539h5v2h-5zM83 540h1v1h-1zM84 282h5v2h-5zM83 283h1v1h-1zM84 245h5v2h-5zM83 246h1v1h-1zM90 576h5v2h-5zM89 577h1v1h-1zM90 538h5v2h-5zM89 539h1v1h-1zM90 282h5v2h-5zM89 283h1v1h-1zM90 246h5v2h-5zM89 247h1v1h-1zM96 575h5v2h-5zM95 576h1v1h-1zM96 538h5v2h-5zM95 539h1v1h-1zM96 283h5v2h-5zM95 284h1v1h-1zM96 246h5v2h-5zM95 247h1v1h-1zM102 575h5v2h-5zM101 576h1v1h-1zM102 538h5v2h-5zM101 539h1v1h-1zM102 284h5v2h-5zM101 285h1v1h-1zM102 247h5v2h-5zM101 248h1v1h-1zM108 575h5v2h-5zM107 576h1v1h-1zM108 537h5v2h-5zM107 538h1v1h-1zM108 284h5v2h-5zM107 285h1v1h-1zM108 247h5v2h-5zM107 248h1v1h-1zM114 574h5v2h-5zM113 575h1v1h-1zM114 537h5v2h-5zM113 538h1v1h-1zM114 285h5v2h-5zM113 286h1v1h-1zM114 248h5v2h-5zM113 249h1v1h-1zM120 574h5v2h-5zM119 575h1v1h-1zM120 537h5v2h-5zM119 538h1v1h-1zM120 285h5v2h-5zM119 286h1v1h-1zM120 249h5v2h-5zM119 250h1v1h-1zM126 573h5v2h-5zM125 574h1v1h-1zM126 536h5v2h-5zM125 537h1v1h-1zM126 286h5v2h-5zM125 287h1v1h-1zM126 249h5v2h-5zM125 250h1v1h-1zM132 573h5v2h-5zM131 574h1v1h-1zM132 536h5v2h-5zM131 537h1v1h-1zM132 287h5v2h-5zM131 288h1v1h-1zM132 250h5v2h-5zM131 251h1v1h-1zM138 573h5v2h-5zM137 574h1v1h-1zM138 535h5v2h-5zM137 536h1v1h-1zM138 287h5v2h-5zM137 288h1v1h-1zM138 250h5v2h-5zM137 251h1v1h-1zM144 572h5v2h-5zM143 573h1v1h-1zM144 535h5v2h-5zM143 536h1v1h-1zM144 288h5v2h-5zM143 289h1v1h-1zM144 251h5v2h-5zM143 252h1v1h-1zM150 572h5v2h-5zM149 573h1v1h-1zM150 535h5v2h-5zM149 536h1v1h-1zM150 289h5v2h-5zM149 290h1v1h-1zM150 252h5v2h-5zM149 253h1v1h-1zM156 572h5v2h-5zM155 573h1v1h-1zM156 534h5v2h-5zM155 535h1v1h-1zM156 289h5v2h-5zM155 290h1v1h-1zM156 252h5v2h-5zM155 253h1v1h-1zM162 571h5v2h-5zM161 572h1v1h-1zM162 534h5v2h-5zM161 535h1v1h-1zM162 290h5v2h-5zM161 291h1v1h-1zM162 253h5v2h-5zM161 254h1v1h-1zM168 571h5v2h-5zM167 572h1v1h-1zM168 534h5v2h-5zM167 535h1v1h-1zM168 290h5v2h-5zM167 291h1v1h-1zM168 253h5v2h-5zM167 254h1v1h-1zM174 571h5v2h-5zM173 572h1v1h-1zM174 533h5v2h-5zM173 534h1v1h-1zM174 291h5v2h-5zM173 292h1v1h-1zM174 254h5v2h-5zM173 255h1v1h-1zM180 570h5v2h-5zM179 571h1v1h-1zM180 533h5v2h-5zM179 534h1v1h-1zM180 292h5v2h-5zM179 293h1v1h-1zM180 255h5v2h-5zM179 256h1v1h-1zM186 570h5v2h-5zM185 571h1v1h-1zM186 532h5v2h-5zM185 533h1v1h-1zM186 292h5v2h-5zM185 293h1v1h-1zM186 255h5v2h-5zM185 256h1v1h-1zM192 570h5v2h-5zM191 571h1v1h-1zM192 532h5v2h-5zM191 533h1v1h-1zM192 293h5v2h-5zM191 294h1v1h-1zM192 256h5v2h-5zM191 257h1v1h-1zM198 569h5v2h-5zM197 570h1v1h-1zM198 532h5v2h-5zM197 533h1v1h-1zM198 294h5v2h-5zM197 295h1v1h-1zM198 256h5v2h-5zM197 257h1v1h-1zM204 569h5v2h-5zM203 570h1v1h-1zM204 531h5v2h-5zM203 532h1v1h-1zM204 294h5v2h-5zM203 295h1v1h-1zM204 257h5v2h-5zM203 258h1v1h-1zM210 569h5v2h-5zM209 570h1v1h-1zM210 531h5v2h-5zM209 532h1v1h-1zM210 295h5v2h-5zM209 296h1v1h-1zM210 258h5v2h-5zM209 259h1v1h-1zM216 568h5v2h-5zM215 569h1v1h-1zM216 530h5v2h-5zM215 531h1v1h-1zM216 296h5v2h-5zM215 297h1v1h-1zM216 258h5v2h-5zM215 259h1v1h-1zM222 568h5v2h-5zM221 569h1v1h-1zM222 530h5v2h-5zM221 531h1v1h-1zM222 296h5v2h-5zM221 297h1v1h-1zM222 259h5v2h-5zM221 260h1v1h-1zM228 568h5v2h-5zM227 569h1v1h-1zM228 530h5v2h-5zM227 531h1v1h-1zM228 297h5v2h-5zM227 298h1v1h-1zM228 259h5v2h-5zM227 260h1v1h-1zM234 567h5v2h-5zM233 568h1v1h-1zM234 529h5v2h-5zM233 530h1v1h-1zM234 298h5v2h-5zM233 299h1v1h-1zM234 260h5v2h-5zM233 261h1v1h-1zM240 567h5v2h-5zM239 568h1v1h-1zM240 529h5v2h-5zM239 530h1v1h-1zM240 298h5v2h-5zM239 299h1v1h-1zM240 261h5v2h-5zM239 262h1v1h-1zM246 567h5v2h-5zM245 568h1v1h-1zM246 528h5v2h-5zM245 529h1v1h-1zM246 299h5v2h-5zM245 300h1v1h-1zM246 261h5v2h-5zM245 262h1v1h-1zM252 566h5v2h-5zM251 567h1v1h-1zM252 528h5v2h-5zM251 529h1v1h-1zM252 300h5v2h-5zM251 301h1v1h-1zM252 262h5v2h-5zM251 263h1v1h-1zM258 566h5v2h-5zM257 567h1v1h-1zM258 528h5v2h-5zM257 529h1v1h-1zM258 300h5v2h-5zM257 301h1v1h-1zM258 262h5v2h-5zM257 263h1v1h-1zM264 566h5v2h-5zM263 567h1v1h-1zM264 527h5v2h-5zM263 528h1v1h-1zM264 301h5v2h-5zM263 302h1v1h-1zM264 263h5v2h-5zM263 264h1v1h-1zM270 565h5v2h-5zM269 566h1v1h-1zM270 527h5v2h-5zM269 528h1v1h-1zM270 302h5v2h-5zM269 303h1v1h-1zM270 264h5v2h-5zM269 265h1v1h-1zM276 565h5v2h-5zM275 566h1v1h-1zM276 526h5v2h-5zM275 527h1v1h-1zM276 302h5v2h-5zM275 303h1v1h-1zM276 264h5v2h-5zM275 265h1v1h-1zM282 565h5v2h-5zM281 566h1v1h-1zM282 526h5v2h-5zM281 527h1v1h-1zM282 303h5v2h-5zM281 304h1v1h-1zM282 265h5v2h-5zM281 266h1v1h-1zM288 564h5v2h-5zM287 565h1v1h-1zM288 525h5v2h-5zM287 526h1v1h-1zM288 304h5v2h-5zM287 305h1v1h-1zM288 265h5v2h-5zM287 266h1v1h-1zM294 564h5v2h-5zM293 565h1v1h-1zM294 525h5v2h-5zM293 526h1v1h-1zM294 304h5v2h-5zM293 305h1v1h-1zM294 266h5v2h-5zM293 267h1v1h-1zM300 564h5v2h-5zM299 565h1v1h-1zM300 525h5v2h-5zM299 526h1v1h-1zM300 305h5v2h-5zM299 306h1v1h-1zM300 266h5v2h-5zM299 267h1v1h-1zM306 563h5v2h-5zM305 564h1v1h-1zM306 524h5v2h-5zM305 525h1v1h-1zM306 306h5v2h-5zM305 307h1v1h-1zM306 267h5v2h-5zM305 268h1v1h-1zM312 563h5v2h-5zM311 564h1v1h-1zM312 524h5v2h-5zM311 525h1v1h-1zM312 306h5v2h-5zM311 307h1v1h-1zM312 268h5v2h-5zM311 269h1v1h-1zM318 563h5v2h-5zM317 564h1v1h-1zM318 523h5v2h-5zM317 524h1v1h-1zM318 307h5v2h-5zM317 308h1v1h-1zM318 268h5v2h-5zM317 269h1v1h-1zM324 562h5v2h-5zM323 563h1v1h-1zM324 523h5v2h-5zM323 524h1v1h-1zM324 308h5v2h-5zM323 309h1v1h-1zM324 269h5v2h-5zM323 270h1v1h-1zM330 562h5v2h-5zM329 563h1v1h-1zM330 522h5v2h-5zM329 523h1v1h-1zM330 308h5v2h-5zM329 309h1v1h-1zM330 269h5v2h-5zM329 270h1v1h-1zM336 562h5v2h-5zM335 563h1v1h-1zM336 522h5v2h-5zM335 523h1v1h-1zM336 309h5v2h-5zM335 310h1v1h-1zM336 270h5v2h-5zM335 271h1v1h-1zM342 561h5v2h-5zM341 562h1v1h-1zM342 521h5v2h-5zM341 522h1v1h-1zM342 310h5v2h-5zM341 311h1v1h-1zM342 270h5v2h-5zM341 271h1v1h-1zM348 561h5v2h-5zM347 562h1v1h-1zM348 521h5v2h-5zM347 522h1v1h-1zM348 310h5v2h-5zM347 311h1v1h-1zM348 271h5v2h-5zM347 272h1v1h-1zM354 561h5v2h-5zM353 562h1v1h-1zM354 521h5v2h-5zM353 522h1v1h-1zM354 311h5v2h-5zM353 312h1v1h-1zM354 271h5v2h-5zM353 272h1v1h-1zM360 560h5v2h-5zM359 561h1v1h-1zM360 520h5v2h-5zM359 521h1v1h-1zM360 312h5v2h-5zM359 313h1v1h-1zM360 272h5v2h-5zM359 273h1v1h-1zM366 560h5v2h-5zM365 561h1v1h-1zM366 520h5v2h-5zM365 521h1v1h-1zM366 312h5v2h-5zM365 313h1v1h-1zM366 272h5v2h-5zM365 273h1v1h-1zM372 560h5v2h-5zM371 561h1v1h-1zM372 519h5v2h-5zM371 520h1v1h-1zM372 313h5v2h-5zM371 314h1v1h-1zM372 273h5v2h-5zM371 274h1v1h-1zM378 559h5v2h-5zM377 560h1v1h-1zM378 519h5v2h-5zM377 520h1v1h-1zM378 313h5v2h-5zM377 314h1v1h-1zM378 273h5v2h-5zM377 274h1v1h-1zM384 559h5v2h-5zM383 560h1v1h-1zM384 518h5v2h-5zM383 519h1v1h-1zM384 314h5v2h-5zM383 315h1v1h-1zM384 274h5v2h-5zM383 275h1v1h-1zM390 559h5v2h-5zM389 560h1v1h-1zM390 518h5v2h-5zM389 519h1v1h-1zM390 315h5v2h-5zM389 316h1v1h-1zM390 274h5v2h-5zM389 275h1v1h-1zM396 558h5v2h-5zM395 559h1v1h-1zM396 517h5v2h-5zM395 518h1v1h-1zM396 315h5v2h-5zM395 316h1v1h-1zM396 275h5v2h-5zM395 276h1v1h-1zM402 558h5v2h-5zM401 559h1v1h-1zM402 517h5v2h-5zM401 518h1v1h-1zM402 316h5v2h-5zM401 317h1v1h-1zM402 275h5v2h-5zM401 276h1v1h-1zM408 558h5v2h-5zM407 559h1v1h-1zM408 516h5v2h-5zM407 517h1v1h-1zM408 316h5v2h-5zM407 317h1v1h-1zM408 276h5v2h-5zM407 277h1v1h-1zM414 557h5v2h-5zM413 558h1v1h-1zM414 516h5v2h-5zM413 517h1v1h-1zM414 317h5v2h-5zM413 318h1v1h-1zM414 276h5v2h-5zM413 277h1v1h-1zM420 557h5v2h-5zM419 558h1v1h-1zM420 515h5v2h-5zM419 516h1v1h-1zM420 318h5v2h-5zM419 319h1v1h-1zM420 276h5v2h-5zM419 277h1v1h-1zM426 557h5v2h-5zM425 558h1v1h-1zM426 515h5v2h-5zM425 516h1v1h-1zM426 318h5v2h-5zM425 319h1v1h-1zM426 277h5v2h-5zM425 278h1v1h-1zM432 556h5v2h-5zM431 557h1v1h-1zM432 514h5v2h-5zM431 515h1v1h-1zM432 319h5v2h-5zM431 320h1v1h-1zM432 277h5v2h-5zM431 278h1v1h-1zM438 556h5v2h-5zM437 557h1v1h-1zM438 514h5v2h-5zM437 515h1v1h-1zM438 319h5v2h-5zM437 320h1v1h-1zM438 278h5v2h-5zM437 279h1v1h-1zM444 556h5v2h-5zM443 557h1v1h-1zM444 513h5v2h-5zM443 514h1v1h-1zM444 320h5v2h-5zM443 321h1v1h-1zM444 278h5v2h-5zM443 279h1v1h-1zM450 555h5v2h-5zM449 556h1v1h-1zM450 513h5v2h-5zM449 514h1v1h-1zM450 320h5v2h-5zM449 321h1v1h-1zM450 278h5v2h-5zM449 279h1v1h-1zM456 555h5v2h-5zM455 556h1v1h-1zM456 512h5v2h-5zM455 513h1v1h-1zM456 321h5v2h-5zM455 322h1v1h-1zM456 279h5v2h-5zM455 280h1v1h-1zM462 555h5v2h-5zM461 556h1v1h-1zM462 512h5v2h-5zM461 513h1v1h-1zM462 321h5v2h-5zM461 322h1v1h-1zM462 279h5v2h-5zM461 280h1v1h-1zM468 554h5v2h-5zM467 555h1v1h-1zM468 511h5v2h-5zM467 512h1v1h-1zM468 322h5v2h-5zM467 323h1v1h-1zM468 280h5v2h-5zM467 281h1v1h-1zM474 554h5v2h-5zM473 555h1v1h-1zM474 511h5v2h-5zM473 512h1v1h-1zM474 322h5v2h-5zM473 323h1v1h-1zM474 280h5v2h-5zM473 281h1v1h-1zM480 554h5v2h-5zM479 555h1v1h-1zM480 510h5v2h-5zM479 511h1v1h-1zM480 323h5v2h-5zM479 324h1v1h-1zM480 280h5v2h-5zM479 281h1v1h-1zM486 553h5v2h-5zM485 554h1v1h-1zM486 510h5v2h-5zM485 511h1v1h-1zM486 323h5v2h-5zM485 324h1v1h-1zM486 281h5v2h-5zM485 282h1v1h-1zM492 553h5v2h-5zM491 554h1v1h-1zM492 510h5v2h-5zM491 511h1v1h-1zM492 324h5v2h-5zM491 325h1v1h-1zM492 281h5v2h-5zM491 282h1v1h-1zM498 553h5v2h-5zM497 554h1v1h-1zM498 509h5v2h-5zM497 510h1v1h-1zM498 324h5v2h-5zM497 325h1v1h-1zM498 281h5v2h-5zM497 282h1v1h-1zM504 552h5v2h-5zM503 553h1v1h-1zM504 509h5v2h-5zM503 510h1v1h-1zM504 325h5v2h-5zM503 326h1v1h-1zM504 281h5v2h-5zM503 282h1v1h-1zM510 552h5v2h-5zM509 553h1v1h-1zM510 508h5v2h-5zM509 509h1v1h-1zM510 325h5v2h-5zM509 326h1v1h-1zM510 282h5v2h-5zM509 283h1v1h-1zM516 552h5v2h-5zM515 553h1v1h-1zM516 508h5v2h-5zM515 509h1v1h-1zM516 326h5v2h-5zM515 327h1v1h-1zM516 282h5v2h-5zM515 283h1v1h-1zM522 551h5v2h-5zM521 552h1v1h-1zM522 507h5v2h-5zM521 508h1v1h-1zM522 326h5v2h-5zM521 327h1v1h-1zM522 282h5v2h-5zM521 283h1v1h-1zM528 551h5v2h-5zM527 552h1v1h-1zM528 507h5v2h-5zM527 508h1v1h-1zM528 326h5v2h-5zM527 327h1v1h-1zM528 283h5v2h-5zM527 284h1v1h-1zM534 551h5v2h-5zM533 552h1v1h-1zM534 506h5v2h-5zM533 507h1v1h-1zM534 327h5v2h-5zM533 328h1v1h-1zM534 283h5v2h-5zM533 284h1v1h-1zM540 550h5v2h-5zM539 551h1v1h-1zM540 506h5v2h-5zM539 507h1v1h-1zM540 327h5v2h-5zM539 328h1v1h-1zM540 283h5v2h-5zM539 284h1v1h-1zM546 550h5v2h-5zM545 551h1v1h-1zM546 505h5v2h-5zM545 506h1v1h-1zM546 327h5v2h-5zM545 328h1v1h-1zM546 283h5v2h-5zM545 284h1v1h-1zM552 550h5v2h-5zM551 551h1v1h-1zM552 505h5v2h-5zM551 506h1v1h-1zM552 328h5v2h-5zM551 329h1v1h-1zM552 283h5v2h-5zM551 284h1v1h-1zM558 549h5v2h-5zM557 550h1v1h-1zM558 505h5v2h-5zM557 506h1v1h-1zM558 328h5v2h-5zM557 329h1v1h-1zM558 284h5v2h-5zM557 285h1v1h-1zM564 549h5v2h-5zM563 550h1v1h-1zM564 504h5v2h-5zM563 505h1v1h-1zM564 328h5v2h-5zM563 329h1v1h-1zM564 284h5v2h-5zM563 285h1v1h-1zM570 549h5v2h-5zM569 550h1v1h-1zM570 504h5v2h-5zM569 505h1v1h-1zM570 329h5v2h-5zM569 330h1v1h-1zM570 284h5v2h-5zM569 285h1v1h-1zM576 549h5v2h-5zM575 550h1v1h-1zM576 503h5v2h-5zM575 504h1v1h-1zM576 329h5v2h-5zM575 330h1v1h-1zM576 284h5v2h-5zM575 285h1v1h-1zM582 548h5v2h-5zM581 549h1v1h-1zM582 503h5v2h-5zM581 504h1v1h-1zM582 329h5v2h-5zM581 330h1v1h-1zM582 284h5v2h-5zM581 285h1v1h-1zM588 548h5v2h-5zM587 549h1v1h-1zM588 503h5v2h-5zM587 504h1v1h-1zM588 329h5v2h-5zM587 330h1v1h-1zM588 284h5v2h-5zM587 285h1v1h-1zM594 548h5v2h-5zM593 549h1v1h-1zM594 502h5v2h-5zM593 503h1v1h-1zM594 330h5v2h-5zM593 331h1v1h-1zM594 285h5v2h-5zM593 286h1v1h-1zM600 548h5v2h-5zM599 549h1v1h-1zM600 502h5v2h-5zM599 503h1v1h-1zM600 330h5v2h-5zM599 331h1v1h-1zM600 285h5v2h-5zM599 286h1v1h-1zM606 547h5v2h-5zM605 548h1v1h-1zM606 501h5v2h-5zM605 502h1v1h-1zM606 330h5v2h-5zM605 331h1v1h-1zM606 285h5v2h-5zM605 286h1v1h-1zM612 547h5v2h-5zM611 548h1v1h-1zM612 501h5v2h-5zM611 502h1v1h-1zM612 330h5v2h-5zM611 331h1v1h-1zM612 285h5v2h-5zM611 286h1v1h-1zM618 547h5v2h-5zM617 548h1v1h-1zM618 501h5v2h-5zM617 502h1v1h-1zM618 330h5v2h-5zM617 331h1v1h-1zM618 285h5v2h-5zM617 286h1v1h-1zM624 547h5v2h-5zM623 548h1v1h-1zM624 500h5v2h-5zM623 501h1v1h-1zM624 331h5v2h-5zM623 332h1v1h-1zM624 285h5v2h-5zM623 286h1v1h-1zM630 546h5v2h-5zM629 547h1v1h-1zM630 500h5v2h-5zM629 501h1v1h-1zM630 331h5v2h-5zM629 332h1v1h-1zM630 285h5v2h-5zM629 286h1v1h-1zM636 546h5v2h-5zM635 547h1v1h-1zM636 500h5v2h-5zM635 501h1v1h-1zM636 331h5v2h-5zM635 332h1v1h-1zM636 285h5v2h-5zM635 286h1v1h-1zM642 546h5v2h-5zM641 547h1v1h-1zM642 500h5v2h-5zM641 501h1v1h-1zM642 331h5v2h-5zM641 332h1v1h-1zM642 285h5v2h-5zM641 286h1v1h-1zM648 546h5v2h-5zM647 547h1v1h-1zM648 499h5v2h-5zM647 500h1v1h-1zM648 331h5v2h-5zM647 332h1v1h-1zM648 285h5v2h-5zM647 286h1v1h-1zM654 545h5v2h-5zM653 546h1v1h-1zM654 499h5v2h-5zM653 500h1v1h-1zM654 331h5v2h-5zM653 332h1v1h-1zM654 285h5v2h-5zM653 286h1v1h-1zM660 545h5v2h-5zM659 546h1v1h-1zM660 499h5v2h-5zM659 500h1v1h-1zM660 331h5v2h-5zM659 332h1v1h-1zM660 285h5v2h-5zM659 286h1v1h-1zM666 545h5v2h-5zM665 546h1v1h-1zM666 499h5v2h-5zM665 500h1v1h-1zM666 331h5v2h-5zM665 332h1v1h-1zM666 285h5v2h-5zM665 286h1v1h-1zM672 545h5v2h-5zM671 546h1v1h-1zM672 498h5v2h-5zM671 499h1v1h-1zM672 331h5v2h-5zM671 332h1v1h-1zM672 285h5v2h-5zM671 286h1v1h-1zM678 545h5v2h-5zM677 546h1v1h-1zM678 498h5v2h-5zM677 499h1v1h-1zM678 331h5v2h-5zM677 332h1v1h-1zM678 285h5v2h-5zM677 286h1v1h-1zM684 545h5v2h-5zM683 546h1v1h-1zM684 498h5v2h-5zM683 499h1v1h-1zM684 331h5v2h-5zM683 332h1v1h-1zM684 285h5v2h-5zM683 286h1v1h-1zM690 545h5v2h-5zM689 546h1v1h-1zM690 498h5v2h-5zM689 499h1v1h-1zM690 331h5v2h-5zM689 332h1v1h-1zM690 285h5v2h-5zM689 286h1v1h-1zM696 544h5v2h-5zM695 545h1v1h-1zM696 498h5v2h-5zM695 499h1v1h-1zM696 331h5v2h-5zM695 332h1v1h-1zM696 285h5v2h-5zM695 286h1v1h-1zM702 544h5v2h-5zM701 545h1v1h-1zM702 498h5v2h-5zM701 499h1v1h-1zM702 331h5v2h-5zM701 332h1v1h-1zM702 285h5v2h-5zM701 286h1v1h-1zM708 544h5v2h-5zM707 545h1v1h-1zM708 497h5v2h-5zM707 498h1v1h-1zM708 331h5v2h-5zM707 332h1v1h-1zM708 285h5v2h-5zM707 286h1v1h-1zM714 544h5v2h-5zM713 545h1v1h-1zM714 497h5v2h-5zM713 498h1v1h-1zM714 331h5v2h-5zM713 332h1v1h-1zM714 285h5v2h-5zM713 286h1v1h-1zM720 544h5v2h-5zM719 545h1v1h-1zM720 497h5v2h-5zM719 498h1v1h-1zM720 331h5v2h-5zM719 332h1v1h-1zM720 284h5v2h-5zM719 285h1v1h-1zM726 544h5v2h-5zM725 545h1v1h-1zM726 497h5v2h-5zM725 498h1v1h-1zM726 331h5v2h-5zM725 332h1v1h-1zM726 284h5v2h-5zM725 285h1v1h-1zM732 544h5v2h-5zM731 545h1v1h-1zM732 497h5v2h-5zM731 498h1v1h-1zM732 330h5v2h-5zM731 331h1v1h-1zM732 284h5v2h-5zM731 285h1v1h-1zM738 544h5v2h-5zM737 545h1v1h-1zM738 497h5v2h-5zM737 498h1v1h-1zM738 330h5v2h-5zM737 331h1v1h-1zM738 284h5v2h-5zM737 285h1v1h-1zM744 544h5v2h-5zM743 545h1v1h-1zM744 497h5v2h-5zM743 498h1v1h-1zM744 330h5v2h-5zM743 331h1v1h-1zM744 284h5v2h-5zM743 285h1v1h-1zM750 544h5v2h-5zM749 545h1v1h-1zM750 497h5v2h-5zM749 498h1v1h-1zM750 330h5v2h-5zM749 331h1v1h-1zM750 284h5v2h-5zM749 285h1v1h-1zM756 544h5v2h-5zM755 545h1v1h-1zM756 497h5v2h-5zM755 498h1v1h-1zM756 330h5v2h-5zM755 331h1v1h-1zM756 284h5v2h-5zM755 285h1v1h-1zM762 544h5v2h-5zM761 545h1v1h-1zM762 497h5v2h-5zM761 498h1v1h-1zM762 329h5v2h-5zM761 330h1v1h-1zM762 283h5v2h-5zM761 284h1v1h-1zM768 544h5v2h-5zM767 545h1v1h-1zM768 497h5v2h-5zM767 498h1v1h-1zM768 329h5v2h-5zM767 330h1v1h-1zM768 283h5v2h-5zM767 284h1v1h-1zM774 544h5v2h-5zM773 545h1v1h-1zM774 497h5v2h-5zM773 498h1v1h-1zM774 329h5v2h-5zM773 330h1v1h-1zM774 283h5v2h-5zM773 284h1v1h-1zM780 544h5v2h-5zM779 545h1v1h-1zM780 497h5v2h-5zM779 498h1v1h-1zM780 329h5v2h-5zM779 330h1v1h-1zM780 283h5v2h-5zM779 284h1v1h-1zM786 544h5v2h-5zM785 545h1v1h-1zM786 498h5v2h-5zM785 499h1v1h-1zM786 328h5v2h-5zM785 329h1v1h-1zM786 283h5v2h-5zM785 284h1v1h-1zM792 544h5v2h-5zM791 545h1v1h-1zM792 498h5v2h-5zM791 499h1v1h-1zM792 328h5v2h-5zM791 329h1v1h-1zM792 282h5v2h-5zM791 283h1v1h-1zM798 544h5v2h-5zM797 545h1v1h-1zM798 498h5v2h-5zM797 499h1v1h-1zM798 328h5v2h-5zM797 329h1v1h-1zM798 282h5v2h-5zM797 283h1v1h-1zM804 544h5v2h-5zM803 545h1v1h-1zM804 498h5v2h-5zM803 499h1v1h-1zM804 328h5v2h-5zM803 329h1v1h-1zM804 282h5v2h-5zM803 283h1v1h-1zM810 544h5v2h-5zM809 545h1v1h-1zM810 498h5v2h-5zM809 499h1v1h-1zM810 327h5v2h-5zM809 328h1v1h-1zM810 282h5v2h-5zM809 283h1v1h-1zM816 544h5v2h-5zM815 545h1v1h-1zM816 498h5v2h-5zM815 499h1v1h-1zM816 327h5v2h-5zM815 328h1v1h-1zM816 281h5v2h-5zM815 282h1v1h-1zM822 544h5v2h-5zM821 545h1v1h-1zM822 499h5v2h-5zM821 500h1v1h-1zM822 327h5v2h-5zM821 328h1v1h-1zM822 281h5v2h-5zM821 282h1v1h-1zM828 544h5v2h-5zM827 545h1v1h-1zM828 499h5v2h-5zM827 500h1v1h-1zM828 326h5v2h-5zM827 327h1v1h-1zM828 281h5v2h-5zM827 282h1v1h-1zM834 544h5v2h-5zM833 545h1v1h-1zM834 499h5v2h-5zM833 500h1v1h-1zM834 326h5v2h-5zM833 327h1v1h-1zM834 281h5v2h-5zM833 282h1v1h-1zM840 545h5v2h-5zM839 546h1v1h-1zM840 499h5v2h-5zM839 500h1v1h-1zM840 325h5v2h-5zM839 326h1v1h-1zM840 280h5v2h-5zM839 281h1v1h-1zM846 545h5v2h-5zM845 546h1v1h-1zM846 500h5v2h-5zM845 501h1v1h-1zM846 325h5v2h-5zM845 326h1v1h-1zM846 280h5v2h-5zM845 281h1v1h-1zM852 545h5v2h-5zM851 546h1v1h-1zM852 500h5v2h-5zM851 501h1v1h-1zM852 325h5v2h-5zM851 326h1v1h-1zM852 280h5v2h-5zM851 281h1v1h-1zM858 545h5v2h-5zM857 546h1v1h-1zM858 500h5v2h-5zM857 501h1v1h-1zM858 324h5v2h-5zM857 325h1v1h-1zM858 280h5v2h-5zM857 281h1v1h-1zM864 545h5v2h-5zM863 546h1v1h-1zM864 500h5v2h-5zM863 501h1v1h-1zM864 324h5v2h-5zM863 325h1v1h-1zM864 279h5v2h-5zM863 280h1v1h-1zM870 546h5v2h-5zM869 547h1v1h-1zM870 501h5v2h-5zM869 502h1v1h-1zM870 323h5v2h-5zM869 324h1v1h-1zM870 279h5v2h-5zM869 280h1v1h-1zM876 546h5v2h-5zM875 547h1v1h-1zM876 501h5v2h-5zM875 502h1v1h-1zM876 323h5v2h-5zM875 324h1v1h-1zM876 279h5v2h-5zM875 280h1v1h-1zM882 546h5v2h-5zM881 547h1v1h-1zM882 502h5v2h-5zM881 503h1v1h-1zM882 323h5v2h-5zM881 324h1v1h-1zM882 279h5v2h-5zM881 280h1v1h-1zM888 546h5v2h-5zM887 547h1v1h-1zM888 502h5v2h-5zM887 503h1v1h-1zM888 322h5v2h-5zM887 323h1v1h-1zM888 278h5v2h-5zM887 279h1v1h-1zM894 547h5v2h-5zM893 548h1v1h-1zM894 502h5v2h-5zM893 503h1v1h-1zM894 322h5v2h-5zM893 323h1v1h-1zM894 278h5v2h-5zM893 279h1v1h-1zM900 547h5v2h-5zM899 548h1v1h-1zM900 503h5v2h-5zM899 504h1v1h-1zM900 321h5v2h-5zM899 322h1v1h-1zM900 278h5v2h-5zM899 279h1v1h-1zM906 547h5v2h-5zM905 548h1v1h-1zM906 503h5v2h-5zM905 504h1v1h-1zM906 321h5v2h-5zM905 322h1v1h-1zM906 277h5v2h-5zM905 278h1v1h-1zM912 547h5v2h-5zM911 548h1v1h-1zM912 504h5v2h-5zM911 505h1v1h-1zM912 320h5v2h-5zM911 321h1v1h-1zM912 277h5v2h-5zM911 278h1v1h-1zM918 548h5v2h-5zM917 549h1v1h-1zM918 504h5v2h-5zM917 505h1v1h-1zM918 320h5v2h-5zM917 321h1v1h-1zM918 277h5v2h-5zM917 278h1v1h-1zM924 548h5v2h-5zM923 549h1v1h-1zM924 504h5v2h-5zM923 505h1v1h-1zM924 319h5v2h-5zM923 320h1v1h-1zM924 276h5v2h-5zM923 277h1v1h-1zM930 548h5v2h-5zM929 549h1v1h-1zM930 505h5v2h-5zM929 506h1v1h-1zM930 319h5v2h-5zM929 320h1v1h-1zM930 276h5v2h-5zM929 277h1v1h-1zM936 549h5v2h-5zM935 550h1v1h-1zM936 505h5v2h-5zM935 506h1v1h-1zM936 319h5v2h-5zM935 320h1v1h-1zM936 276h5v2h-5zM935 277h1v1h-1zM942 549h5v2h-5zM941 550h1v1h-1zM942 506h5v2h-5zM941 507h1v1h-1zM942 318h5v2h-5zM941 319h1v1h-1zM942 275h5v2h-5zM941 276h1v1h-1zM948 549h5v2h-5zM947 550h1v1h-1zM948 506h5v2h-5zM947 507h1v1h-1zM948 318h5v2h-5zM947 319h1v1h-1zM948 275h5v2h-5zM947 276h1v1h-1zM954 550h5v2h-5zM953 551h1v1h-1zM954 507h5v2h-5zM953 508h1v1h-1zM954 317h5v2h-5zM953 318h1v1h-1zM954 275h5v2h-5zM953 276h1v1h-1zM960 550h5v2h-5zM959 551h1v1h-1zM960 507h5v2h-5zM959 508h1v1h-1zM960 317h5v2h-5zM959 318h1v1h-1zM960 274h5v2h-5zM959 275h1v1h-1zM966 550h5v2h-5zM965 551h1v1h-1zM966 508h5v2h-5zM965 509h1v1h-1zM966 316h5v2h-5zM965 317h1v1h-1zM966 274h5v2h-5zM965 275h1v1h-1zM972 551h5v2h-5zM971 552h1v1h-1zM972 508h5v2h-5zM971 509h1v1h-1zM972 316h5v2h-5zM971 317h1v1h-1zM972 274h5v2h-5zM971 275h1v1h-1z"/><path d="M50 148h1v5h-1zM50 682h1v5h-1zM110 148h1v5h-1zM110 682h1v5h-1zM170 148h1v5h-1zM170 682h1v5h-1zM230 148h1v5h-1zM230 682h1v5h-1zM290 148h1v5h-1zM290 682h1v5h-1zM350 148h1v5h-1zM350 682h1v5h-1zM410 148h1v5h-1zM410 682h1v5h-1zM470 148h1v5h-1zM470 682h1v5h-1zM530 148h1v5h-1zM530 682h1v5h-1zM590 148h1v5h-1zM590 682h1v5h-1zM650 148h1v5h-1zM650 682h1v5h-1zM710 148h1v5h-1zM710 682h1v5h-1zM770 148h1v5h-1zM770 682h1v5h-1zM830 148h1v5h-1zM830 682h1v5h-1zM890 148h1v5h-1zM890 682h1v5h-1zM950 148h1v5h-1zM950 682h1v5h-1zM42 175h5v1h-5zM972 175h5v1h-5zM42 202h5v1h-5zM972 202h5v1h-5zM42 229h5v1h-5zM972 229h5v1h-5zM42 256h5v1h-5zM972 256h5v1h-5zM42 283h5v1h-5zM972 283h5v1h-5zM42 310h5v1h-5zM972 310h5v1h-5zM42 337h5v1h-5zM972 337h5v1h-5zM42 364h5v1h-5zM972 364h5v1h-5zM42 391h5v1h-5zM972 391h5v1h-5zM42 418h5v1h-5zM972 418h5v1h-5zM42 445h5v1h-5zM972 445h5v1h-5zM42 472h5v1h-5zM972 472h5v1h-5zM42 499h5v1h-5zM972 499h5v1h-5zM42 526h5v1h-5zM972 526h5v1h-5zM42 553h5v1h-5zM972 553h5v1h-5zM42 580h5v1h-5zM972 580h5v1h-5zM42 607h5v1h-5zM972 607h5v1h-5zM42 634h5v1h-5zM972 634h5v1h-5zM42 661h5v1h-5zM972 661h5v1h-5z"/><path d="M41 147h937v1h-937zM41 687h937v1h-937zM41 147h1v541h-1zM977 147h1v541h-1z"/></svg><div class="a" style="left:7px;top:728px;width:1011px;height:14px;background:#e2e1de;box-shadow:inset 0 1px #d4d0c8, inset 0 -1px #fff"></div><div class="a" style="left:7px;top:729px;width:15px;height:13px;background:#d4d0c8;box-shadow:inset -1px -1px #404040, inset 1px 1px #fff, inset -2px -2px #808080, inset 2px 2px #fff"><svg class="a" style="left:4px;top:3px" width="4" height="7" shape-rendering="crispEdges"><path d="M3 0h1v7h-1v-1h-1v-1h-1v-1h-1v-1h1v-1h1v-1h1z" fill="#000"/></svg></div><div class="a" style="left:73px;top:729px;width:273px;height:13px;background:#d4d0c8;box-shadow:inset -1px -1px #404040, inset 1px 1px #fff, inset -2px -2px #808080, inset 2px 2px #fff"></div><div class="a" style="left:1003px;top:729px;width:15px;height:13px;background:#d4d0c8;box-shadow:inset -1px -1px #404040, inset 1px 1px #fff, inset -2px -2px #808080, inset 2px 2px #fff"><svg class="a" style="left:6px;top:3px" width="4" height="7" shape-rendering="crispEdges"><path d="M0 0h1v1h1v1h1v1h1v1h-1v1h-1v1h-1v1h-1z" fill="#000"/></svg></div><div class="a" style="left:0;top:763px;width:1024px;height:1px;background:#f4f4f0"></div><div class="a" style="left:7px;top:742px;width:1011px;height:13px;background:#fcf4d8;border-top:1px solid #000;border-bottom:1px solid #000"></div><div class="u" style="left:12px;top:744px;">Mask:&nbsp;&nbsp;Ten degrees</div><div class="u" style="left:430px;top:744px;">Night when Sun below -18 degrees</div>
</body></html>
